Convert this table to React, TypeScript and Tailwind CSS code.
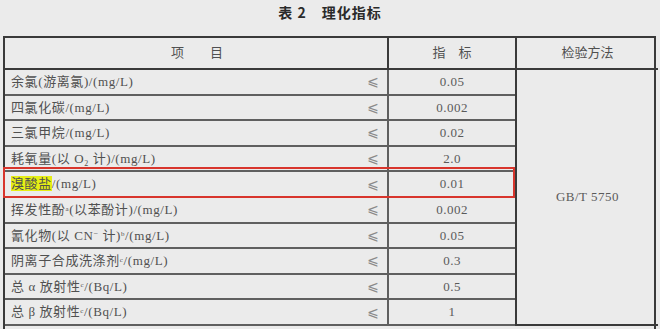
import React from "react";

const rows: { label: React.ReactNode; value: string; hl?: boolean }[] = [
  { label: <>余氯(游离氯)/(mg/L)</>, value: "0.05" },
  { label: <>四氯化碳/(mg/L)</>, value: "0.002" },
  { label: <>三氯甲烷/(mg/L)</>, value: "0.02" },
  { label: <>耗氧量(以 O<sub className="text-[8px] align-baseline relative top-[3px]">2</sub> 计)/(mg/L)</>, value: "2.0" },
  { label: <><span className="bg-[#e6ee14]">溴酸盐</span>/(mg/L)</>, value: "0.01", hl: true },
  { label: <>挥发性酚<sup className="text-[7px]">a</sup>(以苯酚计)/(mg/L)</>, value: "0.002" },
  { label: <>氰化物(以 CN<sup className="text-[8px]">−</sup> 计)<sup className="text-[7px]">b</sup>/(mg/L)</>, value: "0.05" },
  { label: <>阴离子合成洗涤剂<sup className="text-[7px]">c</sup>/(mg/L)</>, value: "0.3" },
  { label: <>总 α 放射性<sup className="text-[7px]">c</sup>/(Bq/L)</>, value: "0.5" },
  { label: <>总 β 放射性<sup className="text-[7px]">c</sup>/(Bq/L)</>, value: "1" },
];

const font = "font-['Liberation_Serif','Noto_Sans_CJK_SC',serif]";

export default function App() {
  return (
    <div className={`w-[660px] h-[329px] overflow-hidden bg-[#ebebeb] text-[#505050] ${font}`}>
      <div className="h-[36px] flex justify-center pt-[2px]">
        <div className="text-[14px] font-bold text-[#2a2a2a] tracking-[1px] leading-[20px] font-['Noto_Sans_CJK_SC',sans-serif]">
          表 2　理化指标
        </div>
      </div>
      <div className="relative ml-[3px] w-[653px]">
        <div className="grid grid-cols-[382px_128px_143px] grid-rows-[32px_repeat(10,25.6px)_30px] border-t-2 border-l-2 border-r-2 border-[#3a3a3a] text-[13px]">
          <div className="flex items-center justify-center border-b-2 border-[#3a3a3a] pl-[2px]">项　　目</div>
          <div className="flex items-center justify-center border-b-2 border-l-2 border-[#3a3a3a]">指　标</div>
          <div className="flex items-center justify-center border-b-2 border-l-2 border-[#3a3a3a]">检验方法</div>
          {rows.map((r, i) => (
            <React.Fragment key={i}>
              <div className="flex items-center justify-between border-b-2 border-[#5f5f5f] pl-[6px] pr-[8px]" style={{ gridRow: i + 2, gridColumn: 1 }}>
                <span className="whitespace-nowrap tracking-[0.6px]">{r.label}</span>
                <span className="text-[#8a8a8a] text-[14px] font-['DejaVu_Sans',sans-serif]">⩽</span>
              </div>
              <div className="flex items-center justify-center border-b-2 border-l-2 border-[#5f5f5f] text-[#5a5a5a] tracking-[0.5px]" style={{ gridRow: i + 2, gridColumn: 2 }}>
                {r.value}
              </div>
            </React.Fragment>
          ))}
          <div className="flex items-center justify-center border-l-2 border-b-2 border-[#3a3a3a] row-start-2 row-end-12 col-start-3 text-[#5a5a5a] tracking-[0.5px]">
            GB/T 5750
          </div>
          <div className="col-span-3" />
        </div>
        <div className="absolute left-[0px] top-[131px] w-[512px] h-[31px] border-2 border-[#d8352c] pointer-events-none" />
      </div>
    </div>
  );
}
